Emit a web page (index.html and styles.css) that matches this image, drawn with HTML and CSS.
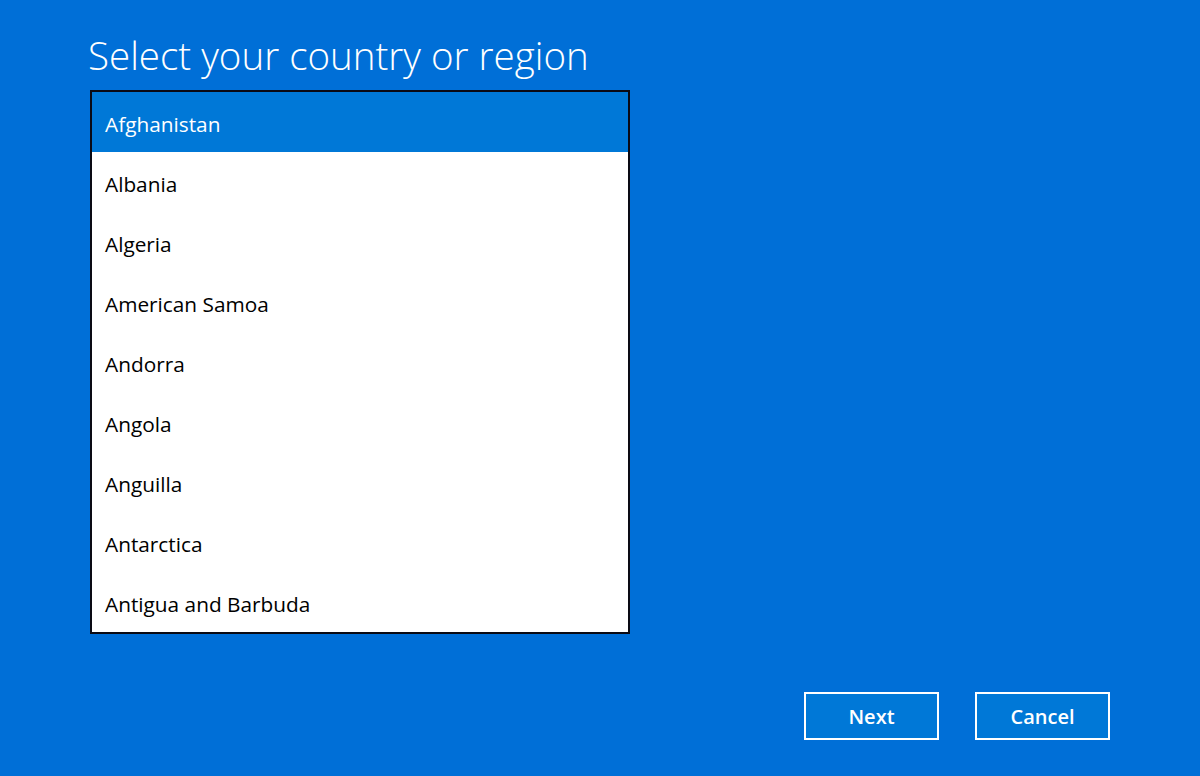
FILE: index.html
```html
<!DOCTYPE html>
<html lang="en">
<head>
    <meta charset="UTF-8">
    <meta name="viewport" content="width=device-width, initial-scale=1.0">
    <title>Select your country or region</title>
    <link rel="stylesheet" href="styles.css">
</head>
<body>
    <div class="page">
        <h1>Select your country or region</h1>
        <ul class="country-list">
            <li class="selected">Afghanistan</li>
            <li>Albania</li>
            <li>Algeria</li>
            <li>American Samoa</li>
            <li>Andorra</li>
            <li>Angola</li>
            <li>Anguilla</li>
            <li>Antarctica</li>
            <li>Antigua and Barbuda</li>
        </ul>
        <div class="actions">
            <button>Next</button>
            <button>Cancel</button>
        </div>
    </div>
</body>
</html>
```
FILE: styles.css
```css
body {
    margin: 0;
    background: #006fd7;
    font-family: 'Open Sans', 'Noto Sans', sans-serif;
    color: #000;
}
.page {
    padding: 30px 0 0 90px;
    height: 746px;
}
h1 {
    margin: 0 0 10px -2px;
    font-weight: 300;
    font-size: 38.5px;
    line-height: 50px;
    color: #fff;
}
.country-list {
    list-style: none;
    margin: 0;
    padding: 0;
    width: 536px;
    border: 2px solid #0a0a14;
    background: #fff;
}
.country-list li {
    height: 60px;
    line-height: 64px;
    padding-left: 13px;
    font-size: 20.8px;
}
.country-list li.selected {
    background: #0078d7;
    color: #fff;
}
.actions {
    display: flex;
    gap: 36px;
    margin: 58px 0 0 714px;
}
.actions button {
    width: 135px;
    height: 48px;
    border: 2px solid #fff;
    background: #0078d7;
    color: #fff;
    font-family: inherit;
    font-weight: 600;
    font-size: 20px;
    cursor: pointer;
}
```
